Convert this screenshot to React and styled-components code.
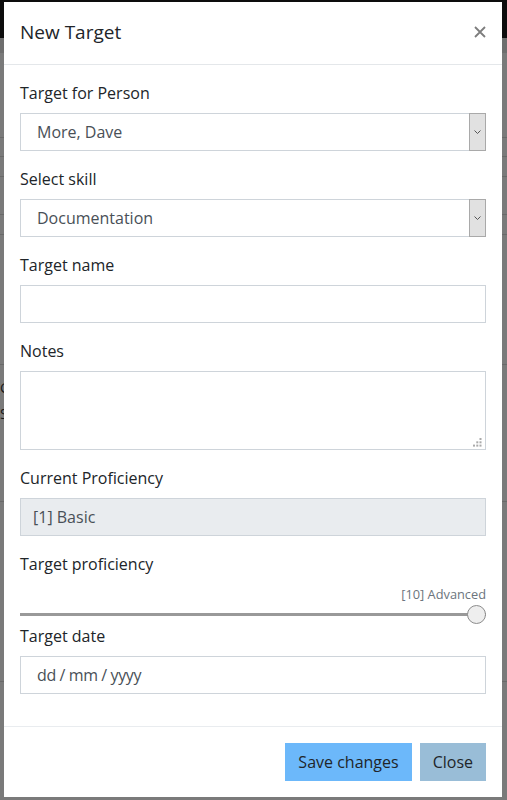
import React from 'react';
import styled, { createGlobalStyle } from 'styled-components';

const GlobalStyle = createGlobalStyle`
  html, body {
    margin: 0;
    padding: 0;
  }
  body {
    font-family: "Open Sans", "Liberation Sans", sans-serif;
    background: #fff;
    overflow: hidden;
  }
  * {
    box-sizing: border-box;
  }
`;

// page behind the dialog
const Page = styled.div`
  height: 800px;
  background: #fff;
`;

const Navbar = styled.div`
  height: 38px;
  background: #1d1d1d;
`;

const SubBar = styled.div`
  height: 15px;
  background: #e5e5e5;
`;

const PageRow = styled.div`
  height: ${({ h }) => h}px;
  border-bottom: 1px solid #dcdcdc;
  padding: 10px 0 0 0;
  font-size: 14px;
  line-height: 26px;
  color: #333;
`;

const Overlay = styled.div`
  position: fixed;
  inset: 0;
  background: rgba(0, 0, 0, 0.52);
`;

const Dialog = styled.div`
  position: fixed;
  top: 2px;
  left: 4px;
  width: 498px;
  background: #fff;
  display: flex;
  flex-direction: column;
`;

const Header = styled.div`
  display: flex;
  align-items: center;
  justify-content: space-between;
  padding: 15px 16px 17px;
  border-bottom: 1px solid #e4e7ea;
`;

const Title = styled.h5`
  margin: 0;
  font-size: 19px;
  line-height: 30px;
  font-weight: 400;
  color: #212529;
`;

const CloseButton = styled.button`
  border: 0;
  background: none;
  padding: 0;
  width: 12px;
  height: 12px;
  display: flex;
  cursor: pointer;
`;

const Body = styled.div`
  padding: 16px;
`;

const FormGroup = styled.div`
  margin-bottom: ${({ tight }) => (tight ? 0 : 16)}px;
`;

const Label = styled.label`
  display: block;
  font-size: 16px;
  line-height: 24px;
  margin-bottom: 8px;
  color: #212529;
`;

const SelectWrap = styled.div`
  position: relative;
`;

const Select = styled.select`
  appearance: none;
  width: 100%;
  height: 38px;
  border: 1px solid #ced4da;
  border-radius: 0;
  padding: 0 24px 0 16px;
  font-family: inherit;
  font-size: 16px;
  color: #495057;
  background: #fff;
  outline: none;
`;

const ArrowBox = styled.span`
  position: absolute;
  top: 0;
  right: 0;
  bottom: 0;
  width: 17px;
  background: #e1e1e1;
  border: 1px solid #a9a9a9;
  display: flex;
  align-items: center;
  justify-content: center;
  pointer-events: none;
`;

const Input = styled.input`
  display: block;
  width: 100%;
  height: 38px;
  border: 1px solid #ced4da;
  border-radius: 0;
  padding: 0 ${({ wide }) => (wide ? 16 : 12)}px;
  font-family: inherit;
  font-size: 16px;
  letter-spacing: ${({ wide }) => (wide ? '-0.4px' : 'normal')};
  color: #495057;
  background: ${({ readOnly }) => (readOnly ? '#e9ecef' : '#fff')};
  outline: none;
  &::placeholder {
    color: #495057;
    opacity: 1;
  }
`;

const AreaWrap = styled.div`
  position: relative;
`;

const TextArea = styled.textarea`
  display: block;
  width: 100%;
  height: 79px;
  border: 1px solid #ced4da;
  border-radius: 0;
  padding: 6px 12px;
  font-family: inherit;
  font-size: 16px;
  color: #495057;
  resize: none;
  outline: none;
`;

const Grip = styled.svg`
  position: absolute;
  right: 4px;
  bottom: 3px;
`;

const RangeValue = styled.div`
  text-align: right;
  font-size: 12.8px;
  line-height: 20px;
  color: #6c757d;
`;

const Range = styled.input`
  appearance: none;
  -webkit-appearance: none;
  display: block;
  width: 100%;
  height: 20px;
  margin: 0;
  background: transparent;
  outline: none;
  &::-webkit-slider-runnable-track {
    height: 3px;
    background: #999;
  }
  &::-webkit-slider-thumb {
    -webkit-appearance: none;
    width: 19px;
    height: 19px;
    margin-top: -8px;
    border-radius: 50%;
    background: #eeeeee;
    border: 1px solid #8c8c8c;
  }
`;

const Footer = styled.div`
  display: flex;
  justify-content: flex-end;
  gap: 8px;
  padding: 16px;
  border-top: 1px solid #e9ecef;
`;

const Button = styled.button`
  padding: 6px 12px;
  font-family: inherit;
  font-size: 16px;
  line-height: 24px;
  border: 1px solid transparent;
  border-radius: 0;
  color: #212529;
  background: ${({ variant }) => (variant === 'primary' ? '#6cb8fa' : '#99bdd7')};
  cursor: pointer;
`;

const rows = [
  { h: 85 },
  { h: 19 },
  { h: 20 },
  { h: 38 },
  { h: 20 },
  { h: 130 },
  { h: 137, text: ['Goals', 'Skills'] },
  { h: 180 },
];

function Chevron() {
  return (
    <svg width="7" height="4" viewBox="0 0 7 4">
      <path d="M0.5 0.5 L3.5 3.5 L6.5 0.5" fill="none" stroke="#555" strokeWidth="1" />
    </svg>
  );
}

function SelectField({ label, value }) {
  return (
    <FormGroup>
      <Label>{label}</Label>
      <SelectWrap>
        <Select defaultValue={value}>
          <option>{value}</option>
        </Select>
        <ArrowBox>
          <Chevron />
        </ArrowBox>
      </SelectWrap>
    </FormGroup>
  );
}

export default function App() {
  return (
    <>
      <GlobalStyle />
      <Page>
        <Navbar />
        <SubBar />
        {rows.map((row, i) => (
          <PageRow key={i} h={row.h}>
            {row.text && row.text.map((t) => <div key={t}>{t}</div>)}
          </PageRow>
        ))}
      </Page>
      <Overlay />
      <Dialog>
        <Header>
          <Title>New Target</Title>
          <CloseButton aria-label="Close">
            <svg width="12" height="12" viewBox="0 0 12 12">
              <path d="M1 1 L11 11 M11 1 L1 11" stroke="#7d7d7d" strokeWidth="1.8" />
            </svg>
          </CloseButton>
        </Header>
        <Body>
          <SelectField label="Target for Person" value="More, Dave" />
          <SelectField label="Select skill" value="Documentation" />
          <FormGroup>
            <Label>Target name</Label>
            <Input type="text" />
          </FormGroup>
          <FormGroup>
            <Label>Notes</Label>
            <AreaWrap>
              <TextArea />
              <Grip width="9" height="9" viewBox="0 0 9 9">
                <g fill="#aaa">
                  <rect x="6.5" y="0" width="2" height="2" />
                  <rect x="3.3" y="3.3" width="2" height="2" />
                  <rect x="6.5" y="3.3" width="2" height="2" />
                  <rect x="0" y="6.6" width="2" height="2" />
                  <rect x="3.3" y="6.6" width="2" height="2" />
                  <rect x="6.5" y="6.6" width="2" height="2" />
                </g>
              </Grip>
            </AreaWrap>
          </FormGroup>
          <FormGroup>
            <Label>Current Proficiency</Label>
            <Input type="text" readOnly value="[1] Basic" />
          </FormGroup>
          <FormGroup tight>
            <Label>Target proficiency</Label>
            <RangeValue>[10] Advanced</RangeValue>
            <Range type="range" min="1" max="10" defaultValue="10" />
          </FormGroup>
          <FormGroup>
            <Label>Target date</Label>
            <Input type="text" wide placeholder="dd / mm / yyyy" />
          </FormGroup>
        </Body>
        <Footer>
          <Button variant="primary">Save changes</Button>
          <Button>Close</Button>
        </Footer>
      </Dialog>
    </>
  );
}
